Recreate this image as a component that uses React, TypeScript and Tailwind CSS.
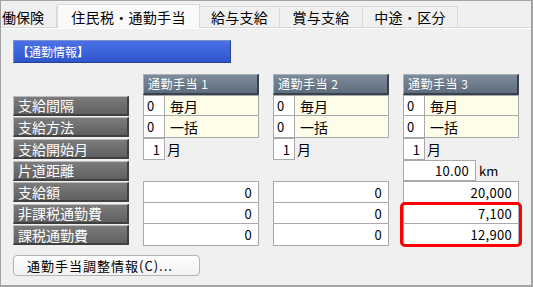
import React from 'react';

const font = { fontFamily: '"Noto Sans CJK JP", "Noto Sans", sans-serif' };

const Label = ({ text }: { text: string }) => (
  <div className="h-[20px] flex items-center pl-[4px] text-[14px] leading-none text-white bg-gradient-to-b from-[#7c7c7c] to-[#606060] border-t border-l border-t-[#bcbcbc] border-l-[#bcbcbc] border-b-2 border-r-2 border-b-[#404040] border-r-[#404040]">
    {text}
  </div>
);

const Header = ({ text }: { text: string }) => (
  <div className="h-[21px] flex items-center pl-[4px] text-[12px] leading-none text-white tracking-[0.5px] bg-gradient-to-b from-[#7d8b9a] to-[#5e6c7b] border-t border-l border-[#a8b0b8] border-b-2 border-r-2 border-b-[#37424e] border-r-[#37424e]">
    {text}
  </div>
);

const CodeCell = ({ code, text, top }: { code: string; text: string; top?: boolean }) => (
  <div className={`flex h-full border border-[#a9a9a9] ${top ? '' : 'border-t-0'} text-[13px] leading-none`}>
    <div className="w-[21px] bg-white border-r border-[#a9a9a9] flex items-center pl-[3px]">{code}</div>
    <div className="flex-1 bg-[#fdfdea] flex items-center pl-[5px] text-[14px]">{text}</div>
  </div>
);

const MonthCell = () => (
  <div className="flex h-full items-stretch text-[13px] leading-none">
    <div className="w-[22px] bg-white border border-[#a9a9a9] flex items-center justify-end pr-[4px]">1</div>
    <div className="flex items-center pl-[2px] text-[14px]">月</div>
  </div>
);

const NumCell = ({ value, top }: { value: string; top?: boolean }) => (
  <div className={`h-full bg-white border border-[#a9a9a9] ${top ? '' : 'border-t-0'} flex items-center justify-end pr-[6px] text-[13px] leading-none tracking-[0.3px]`}>
    {value}
  </div>
);

const Row = ({ h, children }: { h: string; children: React.ReactNode }) => (
  <div className={`grid grid-cols-[116px_116px_116px_116px] gap-x-[14px] items-center ${h}`}>{children}</div>
);

export default function App() {
  const tabs = ['給与支給', '賞与支給', '中途・区分'];
  const tabW = ['w-[80px]', 'w-[83px]', 'w-[95px]'];
  return (
    <div style={font} className="w-[533px] h-[287px] bg-[#f0f0f0] border-t border-l border-r-2 border-b-2 border-[#a3a3a3] text-black overflow-hidden">
      <div className="flex items-end h-[27px] border-b border-[#d8d8d8] relative">
        <div className="w-[56px] h-[21px] flex items-center text-[14px] leading-none pl-[1px] border-r border-[#dadada]">働保険</div>
        <div className="w-[143px] h-[24px] flex items-center justify-center text-[14px] leading-none tracking-[0.3px] bg-[#fafafa] border-x border-t border-[#dadada] -mb-px">住民税・通勤手当</div>
        {tabs.map((t, i) => (
          <div key={t} className={`${tabW[i]} h-[21px] flex items-center justify-center text-[14px] leading-none tracking-[0.3px] border-r border-t border-[#dadada]`}>{t}</div>
        ))}
      </div>
      <div className="border-t border-white pl-[12px] pt-[11px]">
        <div className="w-[218px] h-[23px] flex items-center pl-[3px] text-[12px] leading-none text-white bg-gradient-to-b from-[#4a72e6] to-[#2f55cc] border border-[#7c8fc8] border-b-[#24408f] border-r-[#24408f]">
          【通勤情報】
        </div>
        <div className="mt-[11px]">
          <Row h="h-[21px]">
            <div />
            <Header text="通勤手当 1" />
            <Header text="通勤手当 2" />
            <Header text="通勤手当 3" />
          </Row>
          <Row h="h-[21px]">
            <Label text="支給間隔" />
            <CodeCell code="0" text="毎月" top />
            <CodeCell code="0" text="毎月" top />
            <CodeCell code="0" text="毎月" top />
          </Row>
          <Row h="h-[22px]">
            <Label text="支給方法" />
            <CodeCell code="0" text="一括" />
            <CodeCell code="0" text="一括" />
            <CodeCell code="0" text="一括" />
          </Row>
          <Row h="h-[22px]">
            <Label text="支給開始月" />
            <MonthCell />
            <MonthCell />
            <MonthCell />
          </Row>
          <Row h="h-[21px]">
            <Label text="片道距離" />
            <div />
            <div />
            <div className="flex h-full items-stretch text-[13px] leading-none">
              <div className="w-[73px] bg-white border border-[#a9a9a9] flex items-center justify-end pr-[6px] tracking-[0.3px]">10.00</div>
              <div className="flex items-center pl-[3px]">km</div>
            </div>
          </Row>
          <Row h="h-[22px]">
            <Label text="支給額" />
            <NumCell value="0" top />
            <NumCell value="0" top />
            <NumCell value="20,000" top />
          </Row>
          <Row h="h-[21px]">
            <Label text="非課税通勤費" />
            <NumCell value="0" />
            <NumCell value="0" />
            <div className="relative h-full">
              <NumCell value="7,100" />
              <div className="absolute left-[-3px] right-[-3px] top-[-1px] h-[45px] border-[3px] border-[#ff0000] rounded-[5px] pointer-events-none" />
            </div>
          </Row>
          <Row h="h-[22px]">
            <Label text="課税通勤費" />
            <NumCell value="0" />
            <NumCell value="0" />
            <NumCell value="12,900" />
          </Row>
        </div>
        <button className="mt-[9px] w-[187px] h-[21px] flex items-center pl-[13px] text-[13px] leading-none tracking-[1px] bg-gradient-to-b from-white to-[#f2f2f2] border border-[#b5b5b5] rounded-[4px]">
          通勤手当調整情報(C)...
        </button>
      </div>
    </div>
  );
}
